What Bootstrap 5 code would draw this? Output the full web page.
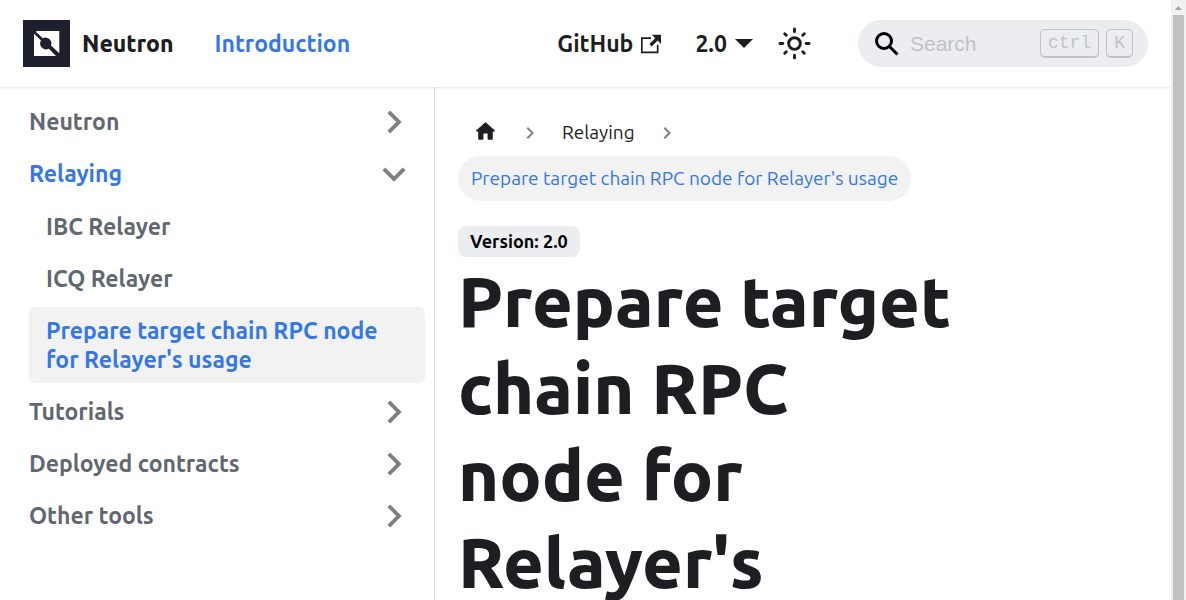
<!DOCTYPE html>
<html lang="en">
<head>
<meta charset="utf-8">
<meta name="viewport" content="width=device-width, initial-scale=1">
<title>Prepare target chain RPC node for Relayer's usage | Neutron</title>
<link href="https://cdn.jsdelivr.net/npm/bootstrap@5.3.0/dist/css/bootstrap.min.css" rel="stylesheet">
<style>
  :root { --ink: #1c1e21; --accent: #3578e5; --muted: #606770; --soft: #ebedf0; --hover: #f2f2f2; }
  body { font-family: "Ubuntu", "Noto Sans", sans-serif; font-size: 23px; line-height: 29px; color: var(--ink); }
  a { color: inherit; text-decoration: none; }
  svg { display: block; flex: none; }
  .topbar { height: 87px; padding: 0 23px; box-shadow: 0 1px 2px rgba(0,0,0,.1); z-index: 2; }
  .site-brand { gap: 12px; margin-right: 41px; font-weight: 800; }
  .accent { color: var(--accent); }
  .top-link { font-weight: 600; }
  .top-links { gap: 34px; font-weight: 600; }
  .version-caret { border: 9px solid transparent; border-top-color: currentColor; border-bottom: 0; }
  .theme-btn { margin: 0 46px 0 -10px; }
  .plain-btn { border: 0; background: none; padding: 0; color: inherit; }
  .search-box { width: 290px; height: 47px; padding: 0 15px 0 17px; background: var(--soft); }
  .search-box input { border: 0; outline: 0; background: none; min-width: 0; padding: 0; margin-left: 11px; font: 21px "Liberation Sans", sans-serif; }
  .search-box input::placeholder { color: #bec3c9; opacity: 1; }
  .search-box kbd { height: 29px; padding: 0 7px; border: 1px solid #bec3c9; border-bottom-width: 2px; border-radius: 5px; background: none; color: #bec3c9; font: 18px/26px "Liberation Mono", monospace; }
  .keys { gap: 7px; }
  .sidebar { flex: 0 0 435px; border-right: 1px solid #dadde1; padding: 11px 9px 12px 12px; font-weight: 600; color: var(--muted); }
  .menu { gap: 5px; }
  .sub-menu { gap: 5px; margin: 1px 0 0 17px; }
  .menu-link { padding: 9px 37px 9px 17px; border-radius: 6px; }
  .menu-head { height: 47px; padding: 0 8px 0 17px; }
  .chev { color: gray; }
  .menu-link.active { background: var(--hover); }
  .doc { padding: 23px; }
  .doc-column { padding-right: 20px; }
  .crumbs { font-size: 19px; line-height: 24px; row-gap: 1px; }
  .crumb { height: 45px; padding: 0 15px 2px; }
  .crumbs .chev { margin: 0 5px; }
  .crumb.active { background: var(--hover); padding: 0 13px 2px; }
  .version-tag { margin-top: 25px; padding: 4px 12px; border-radius: 8px; background: var(--soft); color: #000; font-size: 18px; line-height: 23px; font-weight: 700; }
  .doc-title { font-size: 70px; line-height: 87px; font-weight: 800; margin: 1px 0 0; }
  .scroll-track { flex: 0 0 15px; background: #f1f1f1; }
  .scroll-arrow { height: 15px; }
  .scroll-thumb { background: #c1c1c1; margin: 0 2px; }
</style>
</head>
<body>
<svg class="d-none" aria-hidden="true">
  <symbol id="chevron" viewBox="0 0 24 24"><path fill="currentColor" d="M8.59 16.59 13.17 12 8.59 7.41 10 6l6 6-6 6z"/></symbol>
  <symbol id="chevron-down" viewBox="0 0 24 24"><path fill="currentColor" d="M7.41 8.59 12 13.17l4.59-4.58L18 10l-6 6-6-6z"/></symbol>
</svg>
<div class="d-flex vh-100 overflow-hidden">
  <div class="d-flex flex-column flex-grow-1 overflow-hidden">
    <nav class="topbar d-flex align-items-center flex-shrink-0 position-relative bg-white">
      <a href="#" class="site-brand d-flex align-items-center">
        <svg width="47" height="47" viewBox="0 0 47 47"><path fill="#1f202e" d="M0 0h47v47H0z"/><path fill="#fff" d="M13.500 11h22.800v22.300L28 25.500a5.900 5.900 0 0 0-8.200-7.300L13 12z"/><path fill="#fff" d="M11 13.700 18 20.500a5.900 5.900 0 0 0 7.800 8.200L33 36H11z"/></svg>
        <span>Neutron</span>
      </a>
      <a href="#" class="accent top-link">Introduction</a>
      <div class="top-links d-flex align-items-center ms-auto">
        <a href="#" class="d-flex align-items-center gap-2">GitHub
          <svg width="20" height="20" viewBox="0 0 24 24" fill="currentColor"><path d="M21 13v10h-21v-19h12v2h-10v15h17v-8h2zm3-12h-10.988l4.035 4-6.977 7.070 2.828 2.828 6.977-7.070 4.125 4.172v-11z"/></svg>
        </a>
        <a href="#" class="d-flex align-items-center gap-2">2.0 <span class="version-caret"></span></a>
        <button class="plain-btn theme-btn" type="button" aria-label="Switch between dark and light mode">
          <svg width="35" height="35" viewBox="0 0 24 24" fill="none" stroke="currentColor" stroke-width="2" stroke-linecap="round"><circle cx="12" cy="12" r="4"/><path d="M2 12h2M20 12h2M12 2v2M12 20v2M5.300 5.300l1.050 1.050M17.650 17.650l1.050 1.050M5.300 18.700l1.050-1.050M17.650 6.350l1.050-1.050"/></svg>
        </button>
      </div>
      <div class="search-box d-flex align-items-center rounded-pill">
        <svg width="24" height="24" viewBox="0 0 24 24" fill="none" stroke="#000" stroke-width="3"><circle cx="9" cy="9" r="7.500"/><path d="m14 14 8.500 8.500"/></svg>
        <input class="flex-grow-1" type="search" placeholder="Search" aria-label="Search">
        <span class="keys d-flex"><kbd>ctrl</kbd><kbd>K</kbd></span>
      </div>
    </nav>
    <div class="d-flex flex-grow-1 overflow-hidden">
      <aside class="sidebar">
        <ul class="menu list-unstyled d-flex flex-column mb-0">
          <li><a href="#" class="menu-head d-flex align-items-center justify-content-between">Neutron <svg class="chev" width="46" height="46"><use href="#chevron"/></svg></a></li>
          <li><a href="#" class="menu-head accent d-flex align-items-center justify-content-between">Relaying <svg class="chev" width="46" height="46"><use href="#chevron-down"/></svg></a></li>
          <li>
            <ul class="sub-menu list-unstyled d-flex flex-column">
              <li><a href="#" class="menu-link d-block">IBC Relayer</a></li>
              <li><a href="#" class="menu-link d-block">ICQ Relayer</a></li>
              <li><a href="#" class="menu-link active accent d-block" aria-current="page">Prepare target chain RPC node for Relayer's usage</a></li>
            </ul>
          </li>
          <li><a href="#" class="menu-head d-flex align-items-center justify-content-between">Tutorials <svg class="chev" width="46" height="46"><use href="#chevron"/></svg></a></li>
          <li><a href="#" class="menu-head d-flex align-items-center justify-content-between">Deployed contracts <svg class="chev" width="46" height="46"><use href="#chevron"/></svg></a></li>
          <li><a href="#" class="menu-head d-flex align-items-center justify-content-between">Other tools <svg class="chev" width="46" height="46"><use href="#chevron"/></svg></a></li>
        </ul>
      </aside>
      <main class="doc flex-grow-1">
        <div class="row g-0">
          <div class="doc-column col-9">
            <nav class="crumbs d-flex flex-wrap align-items-center" aria-label="Breadcrumbs">
              <a href="#" class="crumb d-flex align-items-center" aria-label="Home page"><svg width="25" height="25" viewBox="0 0 24 24" fill="currentColor"><path d="M10 19v-5h4v5c0 .55.45 1 1 1h3c.55 0 1-.45 1-1v-7h1.700c.46 0 .68-.57.33-.87L12.670 3.600c-.38-.34-.96-.34-1.340 0l-8.360 7.530c-.34.3-.13.87.33.87H5v7c0 .55.45 1 1 1h3c.55 0 1-.45 1-1z"/></svg></a>
              <svg class="chev" width="24" height="24"><use href="#chevron"/></svg>
              <a href="#" class="crumb d-flex align-items-center">Relaying</a>
              <svg class="chev" width="24" height="24"><use href="#chevron"/></svg>
              <span class="crumb active accent d-flex align-items-center rounded-pill">Prepare target chain RPC node for Relayer's usage</span>
            </nav>
            <span class="version-tag d-inline-block">Version: 2.0</span>
            <h1 class="doc-title">Prepare target chain RPC node for Relayer's</h1>
          </div>
        </div>
      </main>
    </div>
  </div>
  <div class="scroll-track d-flex flex-column" aria-hidden="true">
    <div class="scroll-arrow d-flex align-items-center justify-content-center"><svg width="7" height="4" viewBox="0 0 7 4"><path fill="#a3a3a3" d="M3.500 0 7 4H0z"/></svg></div>
    <div class="scroll-thumb flex-grow-1"></div>
  </div>
</div>
<script src="https://cdn.jsdelivr.net/npm/bootstrap@5.3.0/dist/js/bootstrap.bundle.min.js"></script>
</body>
</html>
